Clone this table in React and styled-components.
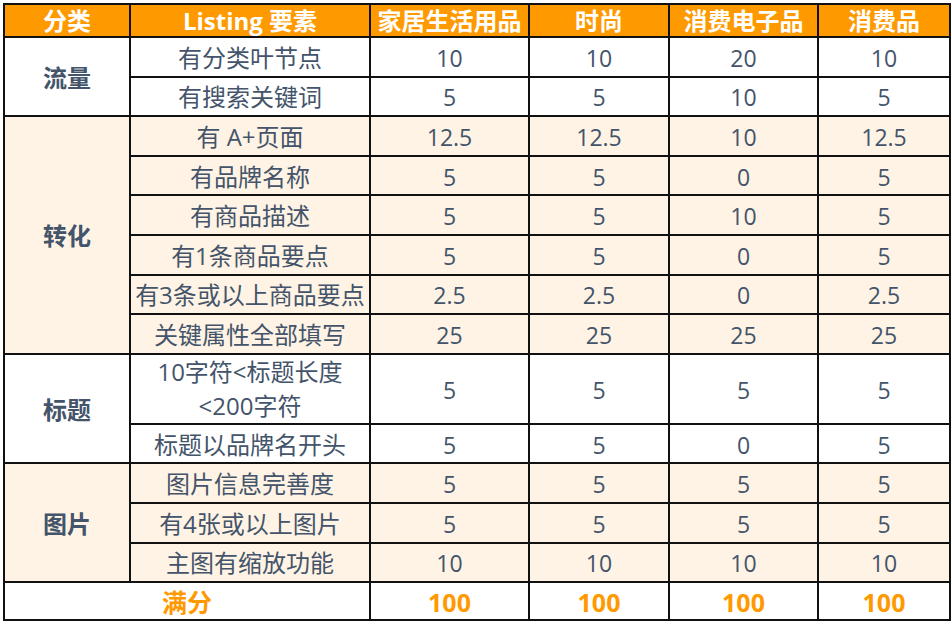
import React from "react";
import styled, { createGlobalStyle } from "styled-components";

const GlobalStyle = createGlobalStyle`
  body {
    margin: 0;
    background: #ffffff;
    font-family: "Open Sans", "Noto Sans CJK SC", sans-serif;
  }
`;

const groups = [
  {
    name: "流量",
    shaded: false,
    rows: [
      { label: "有分类叶节点", values: ["10", "10", "20", "10"] },
      { label: "有搜索关键词", values: ["5", "5", "10", "5"] },
    ],
  },
  {
    name: "转化",
    shaded: true,
    rows: [
      { label: "有 A+页面", values: ["12.5", "12.5", "10", "12.5"] },
      { label: "有品牌名称", values: ["5", "5", "0", "5"] },
      { label: "有商品描述", values: ["5", "5", "10", "5"] },
      { label: "有1条商品要点", values: ["5", "5", "0", "5"] },
      { label: "有3条或以上商品要点", values: ["2.5", "2.5", "0", "2.5"] },
      { label: "关键属性全部填写", values: ["25", "25", "25", "25"] },
    ],
  },
  {
    name: "标题",
    shaded: false,
    rows: [
      { label: ["10字符<标题长度", "<200字符"], values: ["5", "5", "5", "5"], tall: true },
      { label: "标题以品牌名开头", values: ["5", "5", "0", "5"] },
    ],
  },
  {
    name: "图片",
    shaded: true,
    rows: [
      { label: "图片信息完善度", values: ["5", "5", "5", "5"] },
      { label: "有4张或以上图片", values: ["5", "5", "5", "5"] },
      { label: "主图有缩放功能", values: ["10", "10", "10", "10"] },
    ],
  },
];

const columns = ["家居生活用品", "时尚", "消费电子品", "消费品"];

const Page = styled.div`
  padding: 3px 0 0 3px;
`;

const Table = styled.table`
  border-collapse: collapse;
  table-layout: fixed;
  width: 946px;
  color: #44546a;
`;

const HeadRow = styled.tr`
  height: 33px;
  background: #ff9900;
`;

const HeadCell = styled.th`
  border: 2px solid #111;
  padding: 0;
  color: #ffffff;
  font-size: 24px;
  font-weight: 700;
  line-height: 28px;
  text-align: center;
  white-space: nowrap;
`;

const Row = styled.tr`
  height: ${(p) => (p.$tall ? "70px" : "39.6px")};
  background: ${(p) => (p.$shaded ? "#fef3e4" : "#ffffff")};
`;

const Cell = styled.td`
  border: 2px solid #111;
  padding: 2px 0 0;
  font-size: 23px;
  line-height: 34px;
  text-align: center;
  white-space: nowrap;
`;

const GroupCell = styled(Cell)`
  font-weight: 700;
  font-size: 24px;
`;

const LabelCell = styled(Cell)`
  font-size: 24px;
  padding-top: ${(p) => (p.$multi ? "0" : "2px")};
`;

const TotalRow = styled.tr`
  height: 38px;
  background: #ffffff;
`;

const TotalCell = styled(Cell)`
  color: #ff9900;
  font-weight: 700;
  font-size: 25px;
  line-height: 32px;
`;

const widths = [126, 240, 159, 140, 149, 132];

export default function App() {
  return (
    <Page>
      <GlobalStyle />
      <Table>
        <colgroup>
          {widths.map((w, i) => (
            <col key={i} style={{ width: w }} />
          ))}
        </colgroup>
        <thead>
          <HeadRow>
            <HeadCell>分类</HeadCell>
            <HeadCell>Listing 要素</HeadCell>
            {columns.map((c) => (
              <HeadCell key={c}>{c}</HeadCell>
            ))}
          </HeadRow>
        </thead>
        <tbody>
          {groups.map((g) =>
            g.rows.map((r, i) => (
              <Row key={g.name + i} $shaded={g.shaded} $tall={r.tall}>
                {i === 0 && <GroupCell rowSpan={g.rows.length}>{g.name}</GroupCell>}
                <LabelCell $multi={Array.isArray(r.label)}>
                  {Array.isArray(r.label)
                    ? r.label.map((l, k) => <div key={k}>{l}</div>)
                    : r.label}
                </LabelCell>
                {r.values.map((v, k) => (
                  <Cell key={k}>{v}</Cell>
                ))}
              </Row>
            ))
          )}
          <TotalRow>
            <TotalCell colSpan={2}>满分</TotalCell>
            <TotalCell>100</TotalCell>
            <TotalCell>100</TotalCell>
            <TotalCell>100</TotalCell>
            <TotalCell>100</TotalCell>
          </TotalRow>
        </tbody>
      </Table>
    </Page>
  );
}
